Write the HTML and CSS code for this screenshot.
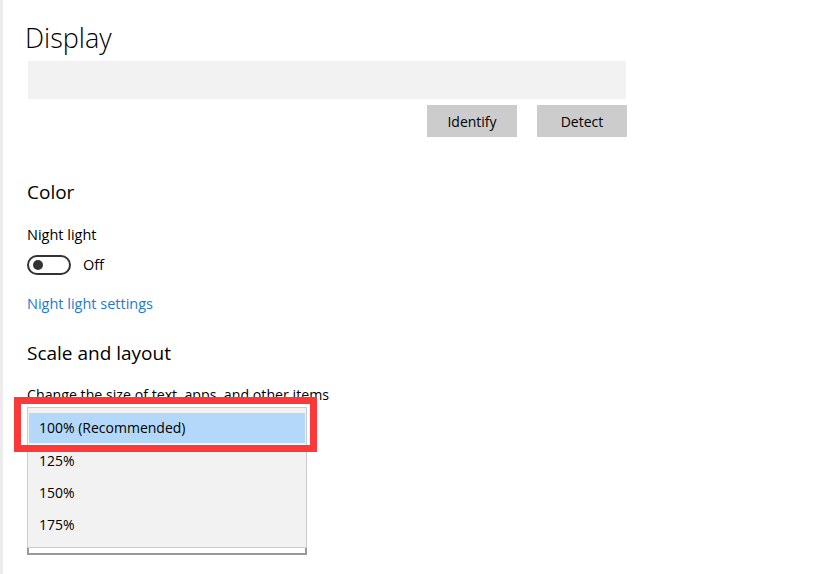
FILE: index.html
```html
<!DOCTYPE html>
<html>
<head>
<meta charset="utf-8">
<link rel="stylesheet" href="styles.css">
</head>
<body>
<div class="page">
  <div class="strip"></div>
  <main class="content">
    <h1 class="title">Display</h1>
    <div class="preview"></div>
    <div class="btn-row">
      <button class="btn">Identify</button>
      <button class="btn">Detect</button>
    </div>
    <h2 class="section">Color</h2>
    <div class="label label-night">Night light</div>
    <div class="toggle-row">
      <span class="toggle"><span class="knob"></span></span>
      <span class="toggle-text">Off</span>
    </div>
    <a class="link">Night light settings</a>
    <h2 class="section section-scale">Scale and layout</h2>
    <div class="label label-change">Change the size of text, apps, and other items</div>
    <div class="combo">
      <div class="popup">
        <div class="item selected">100% (Recommended)</div>
        <div class="item">125%</div>
        <div class="item">150%</div>
        <div class="item">175%</div>
      </div>
      <div class="combo-base"></div>
      <div class="highlight"></div>
    </div>
  </main>
</div>
</body>
</html>
```
FILE: styles.css
```css
html, body {
  margin: 0;
  padding: 0;
  background: #ffffff;
}
body {
  font-family: "Open Sans", "Noto Sans", "Liberation Sans", sans-serif;
  color: #000;
  width: 818px;
  height: 574px;
  overflow: hidden;
}
.page {
  display: flex;
  height: 574px;
}
.strip {
  width: 3px;
  background: #ececec;
  flex: none;
}
.content {
  padding-left: 24px;
  width: 600px;
  display: flex;
  flex-direction: column;
  align-items: flex-start;
}
.title {
  margin: 20px 0 0 -2px;
  font-size: 27px;
  font-weight: 300;
  line-height: 36px;
}
.preview {
  margin: 5px 0 0 1px;
  width: 598px;
  height: 38px;
  background: #f2f2f2;
}
.btn-row {
  margin-top: 6px;
  align-self: stretch;
  display: flex;
  justify-content: flex-end;
  gap: 20px;
}
.btn {
  width: 90px;
  height: 32px;
  border: none;
  background: #cccccc;
  font-family: inherit;
  font-size: 14px;
  color: #000;
  padding: 0;
}
.section {
  margin: 41px 0 0 0;
  font-size: 19px;
  font-weight: 400;
  line-height: 28px;
}
.label {
  font-size: 14.5px;
  line-height: 20px;
}
.label-night {
  margin-top: 19px;
}
.toggle-row {
  margin-top: 10px;
  display: flex;
  align-items: center;
  gap: 12px;
  height: 20px;
}
.toggle {
  box-sizing: border-box;
  width: 44px;
  height: 20px;
  border: 2px solid #333;
  border-radius: 10px;
  display: flex;
  align-items: center;
  padding-left: 4px;
}
.knob {
  width: 10px;
  height: 10px;
  border-radius: 50%;
  background: #333;
}
.toggle-text {
  font-size: 14.5px;
  line-height: 20px;
}
.link {
  margin-top: 19px;
  font-size: 14.5px;
  line-height: 20px;
  color: #1d7bd0;
}
.section-scale {
  margin-top: 25px;
}
.label-change {
  margin-top: 18px;
  font-size: 14.2px;
}
.combo {
  position: relative;
  margin-top: 2px;
  width: 280px;
}
.popup {
  box-sizing: border-box;
  width: 280px;
  background: #f2f2f2;
  border: 1px solid #cccccc;
  padding: 5px 1px 6px;
}
.item {
  height: 32px;
  padding-left: 10px;
  font-size: 14px;
  line-height: 32px;
}
.selected {
  background: linear-gradient(#b3d8fa, #b3d8fa) top left / 100% 30px no-repeat;
  line-height: 30px;
}
.combo-base {
  box-sizing: border-box;
  width: 280px;
  height: 7px;
  border: 2px solid #999999;
  border-top: none;
  background: #fff;
}
.highlight {
  position: absolute;
  left: -13px;
  top: -10px;
  width: 303px;
  height: 55px;
  box-sizing: border-box;
  border: 7px solid #fd3838;
}
```
